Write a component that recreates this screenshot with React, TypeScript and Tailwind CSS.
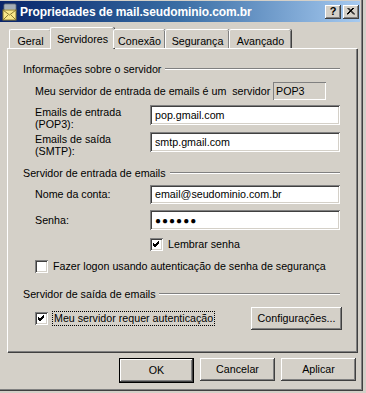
import React from 'react';

const raised =
  'shadow-[inset_-1px_-1px_#404040,inset_1px_1px_#ffffff,inset_-2px_-2px_#808080,inset_2px_2px_#d4d0c8]';
const sunken =
  'shadow-[inset_1px_1px_#808080,inset_-1px_-1px_#ffffff,inset_2px_2px_#404040,inset_-2px_-2px_#d4d0c8]';

const Check = () => (
  <svg width="9" height="9" viewBox="0 0 9 9">
    <path d="M1 3 L3 5 L7 1 M1 4 L3 6 L7 2 M1 5 L3 7 L7 3" stroke="#000" strokeWidth="1" fill="none" />
  </svg>
);

const Checkbox = ({ checked }: { checked?: boolean }) => (
  <div className={`w-[13px] h-[13px] bg-white flex items-center justify-center shrink-0 ${sunken}`}>
    {checked && <Check />}
  </div>
);

const GroupLabel = ({ label }: { label: string }) => (
  <div className="h-[14px] flex items-center pl-[15px] pr-[17px]">
    <span className="pr-[4px] whitespace-nowrap">{label}</span>
    <div className="flex-1 flex flex-col">
      <div className="h-px bg-[#808080]" />
      <div className="h-px bg-white" />
    </div>
  </div>
);

const Input = ({ value, className = '' }: { value: string; className?: string }) => (
  <div className={`w-[190px] bg-white flex items-center pl-[5px] ${sunken} ${className}`}>{value}</div>
);

const tabs = [
  { label: 'Geral', w: 'w-[42px]' },
  { label: 'Servidores', w: 'w-[64px]', active: true },
  { label: 'Conexão', w: 'w-[52px]' },
  { label: 'Segurança', w: 'w-[64px]' },
  { label: 'Avançado', w: 'w-[62px]' },
];

const Button = ({ label, className = '' }: { label: string; className?: string }) => (
  <div className={`h-[23px] flex items-center justify-center ${raised} ${className}`}>{label}</div>
);

export default function App() {
  return (
    <div
      className="w-[366px] h-[393px] bg-[#d4d0c8] text-[10.7px] text-black overflow-hidden flex flex-col"
      style={{ fontFamily: '"Liberation Sans", Arial, sans-serif' }}
    >
      <div className="w-[363px] h-[391px] flex flex-col border-r border-b border-[#404040] shadow-[inset_-1px_-1px_#808080]">
        {/* title bar */}
        <div className="h-[21px] shrink-0 mt-[1px] mr-[2px] flex items-center bg-gradient-to-r from-[#0a246a] via-[#3a6ea5] to-[#a6caf0]">
          <svg width="18" height="18" viewBox="0 0 18 18" className="ml-[1px] shrink-0">
            <rect x="3" y="1" width="12" height="8" rx="1" fill="#c0c8d0" stroke="#5a6470" />
            <path d="M4 3 H14 M4 5 H14" stroke="#8a94a0" />
            <rect x="2" y="7" width="13" height="10" fill="#f8e88a" stroke="#8a7a30" />
            <path d="M2 7 L8.5 12 L15 7 M2 17 L7 12 M15 17 L10 12" stroke="#8a7a30" fill="none" />
          </svg>
          <span className="ml-[1px] text-white font-bold text-[12px] tracking-[-0.1px] whitespace-nowrap">
            Propriedades de mail.seudominio.com.br
          </span>
          <div className="flex-1" />
          <div className={`w-[16px] h-[14px] bg-[#d4d0c8] flex items-center justify-center font-bold text-[11px] ${raised}`}>
            ?
          </div>
          <div className={`w-[16px] h-[14px] ml-[2px] mr-[1px] bg-[#d4d0c8] flex items-center justify-center ${raised}`}>
            <svg width="8" height="7" viewBox="0 0 8 7">
              <path d="M0.5 0 L7 6.5 M1.5 0 L8 6.5 M7 0 L0.5 6.5 M6 0 L-0.5 6.5" stroke="#000" strokeWidth="1" />
            </svg>
          </div>
        </div>

        {/* tabs */}
        <div className="h-[22px] shrink-0 mt-[4px] pl-[9px] flex items-end relative z-10">
          {tabs.map((t) =>
            t.active ? (
              <div
                key={t.label}
                className={`${t.w} h-[22px] -mx-[1px] -mb-[1px] bg-[#d4d0c8] flex items-start justify-center pt-[3px] rounded-t-[2px] border-t border-l border-white shadow-[inset_-1px_0_#808080,1px_0_#404040]`}
              >
                {t.label}
              </div>
            ) : (
              <div
                key={t.label}
                className={`${t.w} h-[19px] bg-[#d4d0c8] flex items-start justify-center pt-[3px] rounded-t-[2px] border-t border-l border-white shadow-[inset_-1px_0_#808080,1px_0_#404040]`}
              >
                {t.label}
              </div>
            ),
          )}
        </div>

        {/* panel */}
        <div className="ml-[7px] w-[350px] h-[304px] shrink-0 border-t border-l border-white shadow-[inset_-1px_-1px_#808080,1px_1px_#404040] pt-[13px]">
          <GroupLabel label="Informações sobre o servidor" />
          <div className="mt-[6px] h-[18px] pl-[27px] flex items-center">
            <span className="w-[238px] whitespace-nowrap">Meu servidor de entrada de emails é um&nbsp; servidor</span>
            <div className="w-[53px] h-[18px] flex items-center pl-[3px] shadow-[inset_1px_1px_#808080,inset_-1px_-1px_#ffffff]">
              POP3
            </div>
          </div>
          <div className="mt-[5px] h-[20px] pl-[27px] flex">
            <div className="w-[115px] leading-[12px] pt-[1px] whitespace-nowrap">
              Emails de entrada
              <br />
              (POP3):
            </div>
            <Input value="pop.gmail.com" className="h-[20px]" />
          </div>
          <div className="mt-[7px] h-[20px] pl-[27px] flex">
            <div className="w-[115px] leading-[12px] pt-[1px] whitespace-nowrap">
              Emails de saída
              <br />
              (SMTP):
            </div>
            <Input value="smtp.gmail.com" className="h-[20px]" />
          </div>

          <div className="mt-[14px]">
            <GroupLabel label="Servidor de entrada de emails" />
          </div>
          <div className="mt-[5px] pl-[27px] flex items-center">
            <span className="w-[115px]">Nome da conta:</span>
            <Input value="email@seudominio.com.br" className="h-[19px]" />
          </div>
          <div className="mt-[6px] pl-[27px] flex items-center">
            <span className="w-[115px]">Senha:</span>
            <Input value="●●●●●●" className="h-[20px] text-[10px] tracking-[1px]" />
          </div>
          <div className="mt-[8px] pl-[142px] flex items-center gap-[5px] h-[13px]">
            <Checkbox checked />
            <span>Lembrar senha</span>
          </div>
          <div className="mt-[9px] pl-[27px] flex items-center gap-[5px] h-[13px]">
            <Checkbox />
            <span>Fazer logon usando autenticação de senha de segurança</span>
          </div>

          <div className="mt-[14px]">
            <GroupLabel label="Servidor de saída de emails" />
          </div>
          <div className="mt-[6px] pl-[27px] flex items-center h-[22px]">
            <Checkbox checked />
            <span className="ml-[4px] px-[1px] h-[15px] flex items-center border border-dotted border-black whitespace-nowrap">
              Meu servidor requer autenticação
            </span>
            <div className="flex-1" />
            <Button label="Configurações..." className="w-[91px] h-[22px] mr-[15px]" />
          </div>
        </div>

        {/* bottom buttons */}
        <div className="mt-[6px] flex justify-end gap-[6px] pr-[6px]">
          <div className="border border-black">
            <Button label="OK" className="w-[73px] h-[21px]" />
          </div>
          <Button label="Cancelar" className="w-[75px]" />
          <Button label="Aplicar" className="w-[75px]" />
        </div>
      </div>
    </div>
  );
}
